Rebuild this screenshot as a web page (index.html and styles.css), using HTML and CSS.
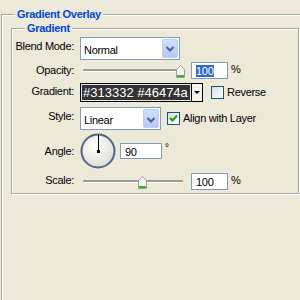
FILE: index.html
```html
<!DOCTYPE html>
<html lang="en">
<head>
  <meta charset="UTF-8" />
  <title>Gradient Overlay</title>
  <link rel="stylesheet" href="styles.css">
</head>
<body>
  <fieldset class="group outer">
    <legend>Gradient Overlay</legend>
    <fieldset class="group inner">
      <legend>Gradient</legend>

      <div class="row row-blend">
        <span class="lbl">Blend Mode:</span>
        <div class="select select-blend">
          <span class="select-text">Normal</span>
          <span class="drop">
            <svg width="14" height="17" viewBox="0 0 14 17"><polyline points="3.5,7 7,10.5 10.5,7" fill="none" stroke="#4d6185" stroke-width="2"/></svg>
          </span>
        </div>
      </div>

      <div class="row row-opacity">
        <span class="lbl">Opacity:</span>
        <div class="slider">
          <div class="track"></div>
          <svg class="thumb" style="left: 96px" width="9" height="13" viewBox="0 0 9 13"><path d="M0.5 4.5 L4.5 0.5 L8.5 4.5 V12.5 H0.5 Z" fill="#f4f4f0" stroke="#9c9e96"/><rect x="1" y="10" width="7" height="2" fill="#35b033"/></svg>
        </div>
        <div class="field"><span class="sel">100</span></div>
        <span class="unit">%</span>
      </div>

      <div class="row row-gradient">
        <span class="lbl">Gradient:</span>
        <div class="grad">
          <div class="swatch">#313332 #46474a</div>
          <div class="grad-arrow">
            <svg width="10" height="17" viewBox="0 0 10 17"><polygon points="2,7 8,7 5,10" fill="#000"/></svg>
          </div>
        </div>
        <span class="check"></span>
        <span class="check-text">Reverse</span>
      </div>

      <div class="row row-style">
        <span class="lbl">Style:</span>
        <div class="select select-style">
          <span class="select-text">Linear</span>
          <span class="drop">
            <svg width="14" height="19" viewBox="0 0 14 19"><polyline points="3.5,8 7,11.5 10.5,8" fill="none" stroke="#4d6185" stroke-width="2"/></svg>
          </span>
        </div>
        <span class="check checked">
          <svg width="11" height="11" viewBox="0 0 11 11"><polyline points="2,5 4.5,7.5 9,2.5" fill="none" stroke="#21a121" stroke-width="2.2"/></svg>
        </span>
        <span class="check-text">Align with Layer</span>
      </div>

      <div class="row row-angle">
        <span class="lbl">Angle:</span>
        <svg class="dial" width="36" height="36" viewBox="0 0 36 36">
          <defs>
            <radialGradient id="dialFill" cx="40%" cy="35%" r="70%">
              <stop offset="0" stop-color="#ffffff"/>
              <stop offset="1" stop-color="#dedcd2"/>
            </radialGradient>
          </defs>
          <circle cx="18" cy="18" r="16.5" fill="url(#dialFill)" stroke="#50638c" stroke-width="2"/>
          <line x1="18.5" y1="2" x2="18.5" y2="18" stroke="#000" stroke-width="1"/>
          <rect x="17" y="17" width="3" height="3" fill="#000"/>
        </svg>
        <div class="field field-angle">90</div>
        <span class="deg">°</span>
      </div>

      <div class="row row-scale">
        <span class="lbl">Scale:</span>
        <div class="slider">
          <div class="track"></div>
          <svg class="thumb" style="left: 58px" width="9" height="13" viewBox="0 0 9 13"><path d="M0.5 4.5 L4.5 0.5 L8.5 4.5 V12.5 H0.5 Z" fill="#f4f4f0" stroke="#9c9e96"/><rect x="1" y="10" width="7" height="2" fill="#35b033"/></svg>
        </div>
        <div class="field">100</div>
        <span class="unit">%</span>
      </div>
    </fieldset>
  </fieldset>
</body>
</html>
```

FILE: styles.css
```css
body {
  margin: 0;
  width: 300px;
  height: 300px;
  overflow: hidden;
  background: #ece9d8;
  font-family: "Liberation Sans", Arial, sans-serif;
  font-size: 11px;
  letter-spacing: -0.3px;
  color: #000;
}

/* etched group boxes */
.group {
  margin: 0;
  border: 1px solid #aca899;
  box-shadow: inset 1px 1px 0 #fff, 1px 1px 0 #fff;
}
.group legend {
  padding: 0 2px;
  font-weight: bold;
  line-height: 13px;
  color: #0046d5;
  background: #ece9d8;
}
/* the outer box runs on past the window, so no right or bottom edge shows */
.outer {
  margin: 8px 0 0 1px;
  width: 299px;
  height: 292px;
  padding: 1px 0 0 9px;
  box-sizing: border-box;
  border-right: 0;
  border-bottom: 0;
  box-shadow: inset 1px 1px 0 #fff;
}
.outer > legend {
  margin-left: 4px;
}
.inner {
  width: 288px;
  box-sizing: border-box;
  padding: 2px 0 3px 0;
}
.inner > legend {
  margin-left: 13px;
}

.row {
  display: flex;
  align-items: center;
}
.lbl {
  width: 62px;
  margin-right: 6px;
  text-align: right;
  line-height: 13px;
}
.row-blend { height: 23px; }
.row-opacity { height: 17px; margin-top: 2px; }
.row-gradient { height: 19px; margin-top: 4px; }
.row-style { height: 23px; margin-top: 5px; }
.row-angle { height: 36px; margin-top: 3px; }
.row-scale { height: 17px; margin-top: 4px; }

.row-blend .lbl,
.row-style .lbl { margin-bottom: 5px; }
.row-gradient .lbl,
.row-scale .lbl { margin-bottom: 3px; }

/* combo boxes */
.select {
  display: flex;
  align-items: center;
  height: 23px;
  box-sizing: border-box;
  border: 1px solid #7f9db9;
  background: #fff;
}
.select-blend { width: 100px; }
.select-style { width: 81px; }
.select-text {
  flex: 1;
  padding: 4px 0 0 3px;
  line-height: 13px;
}
.drop {
  display: flex;
  width: 16px;
  height: 19px;
  margin: 1px;
  box-sizing: border-box;
  border: 1px solid #bccffa;
  border-radius: 2px;
  background: linear-gradient(#d0ddfd, #b5c9f7);
}

/* sliders */
.slider {
  position: relative;
  width: 111px;
  height: 17px;
  display: flex;
  align-items: center;
}
.track {
  width: 100px;
  height: 2px;
  margin-left: 3px;
  background: #9d9b93;
  border-bottom: 1px solid #fff;
  border-radius: 1px;
}
.thumb {
  position: absolute;
  top: 3px;
}

/* text fields */
.field {
  width: 37px;
  height: 17px;
  box-sizing: border-box;
  border: 1px solid #7f9db9;
  background: #fff;
  padding: 2px 0 0 4px;
  line-height: 12px;
}
.sel {
  background: #316ac5;
  color: #fff;
  padding: 0 1px 0 0;
}
.field-angle {
  width: 42px;
  height: 16px;
  margin-left: 4px;
}
.unit {
  margin-left: 3px;
  margin-bottom: 3px;
}
.deg {
  align-self: flex-start;
  margin: 9px 0 0 3px;
  font-size: 10px;
}

/* gradient picker */
.grad {
  display: flex;
  height: 19px;
  box-sizing: border-box;
  border: 1px solid #000;
}
.swatch {
  width: 110px;
  padding-left: 2px;
  box-sizing: border-box;
  background: #333333;
  box-shadow: inset 0 0 0 1px #e8e8e8;
  color: #fff;
  font-size: 13px;
  letter-spacing: 0;
  line-height: 17px;
  white-space: nowrap;
  overflow: hidden;
}
.grad-arrow {
  width: 10px;
  border-left: 1px solid #000;
  background: #f3f2ec;
}

/* check boxes */
.check {
  display: flex;
  align-items: center;
  justify-content: center;
  width: 13px;
  height: 13px;
  box-sizing: border-box;
  border: 1px solid #1c5180;
  background: linear-gradient(135deg, #dcdcd5, #fff);
}
.row-gradient .check { margin-left: 8px; }
.row-style .check { margin-left: 6px; }
.check-text {
  margin-left: 3px;
  line-height: 13px;
}
.dial { flex-shrink: 0; }
```
